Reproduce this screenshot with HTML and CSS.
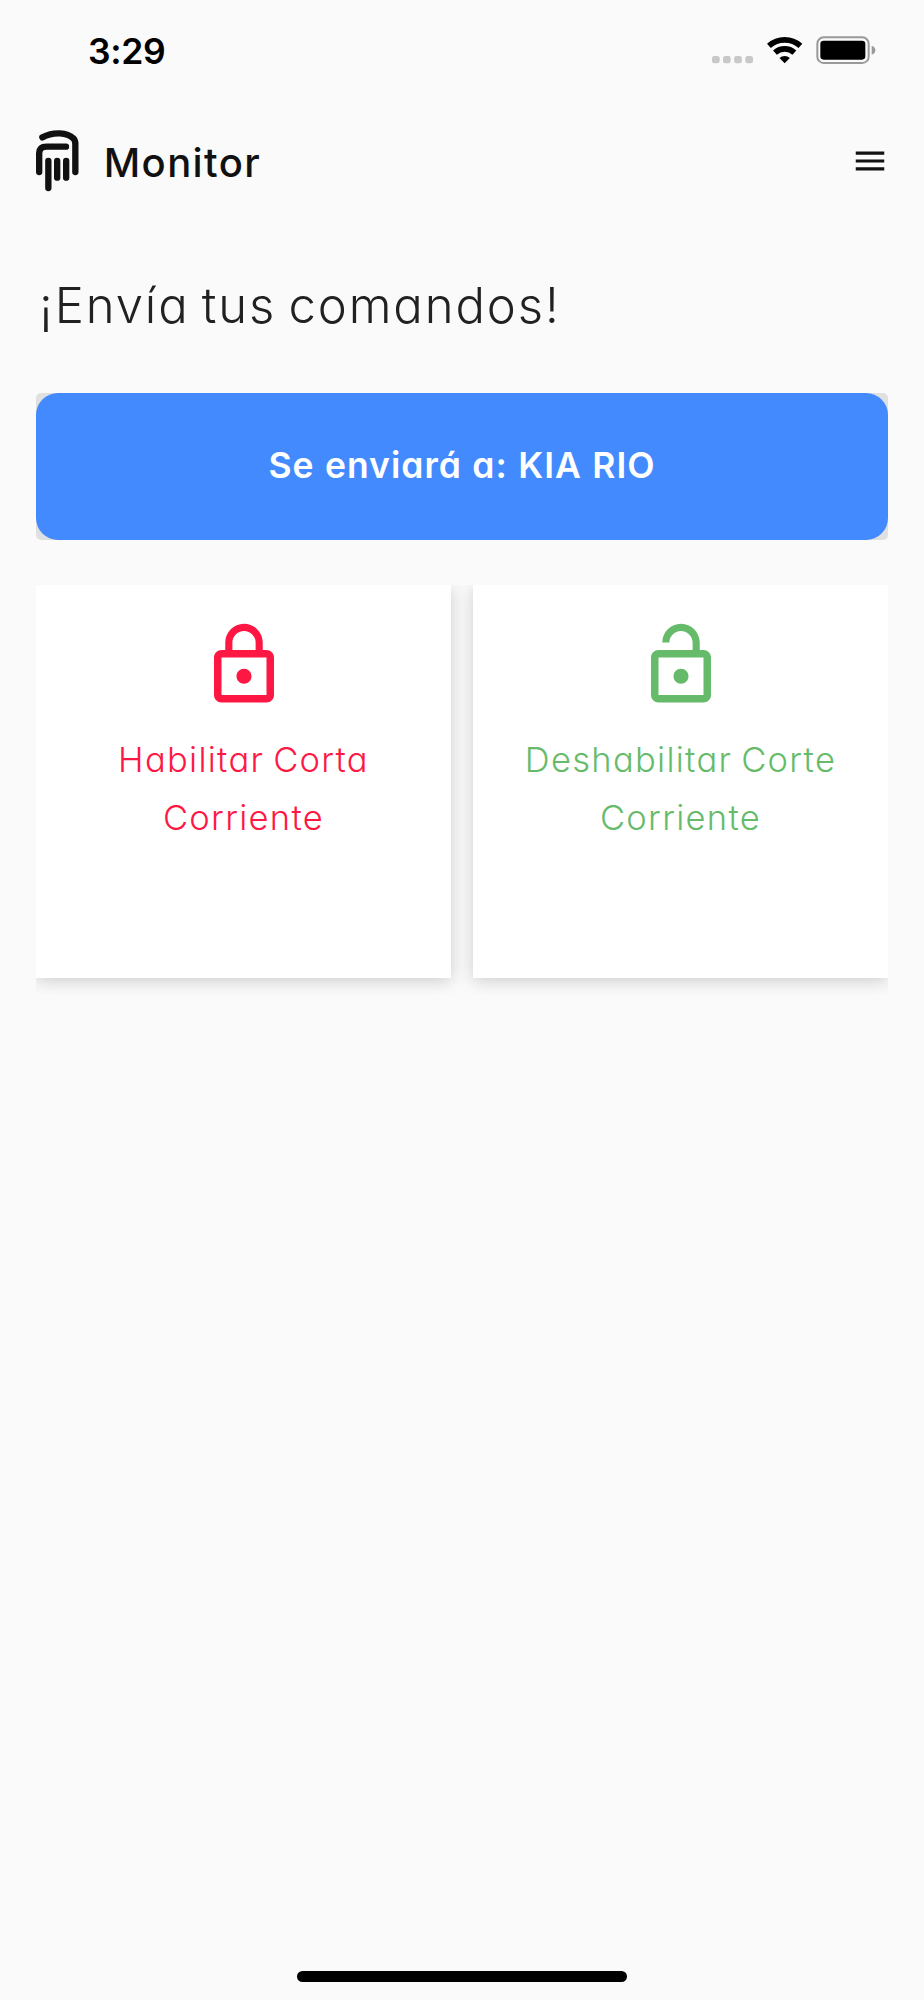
FILE: index.html
```html
<!DOCTYPE html>
<html lang="es">
<head>
    <title>Monitor</title>
    <meta charset="utf-8">
    <link rel="stylesheet" href="styles.css">
</head>

<body>
    <div class="screen">
        <div class="status-bar">
            <span class="time">3:29</span>
            <svg class="status-icons" viewBox="68 48 492 86">
                <g fill="#c8c8c8">
                    <rect x="68" y="108" width="23" height="22" rx="7"/>
                    <rect x="101" y="108" width="23" height="22" rx="7"/>
                    <rect x="134.500" y="108" width="23" height="22" rx="7"/>
                    <rect x="168" y="108" width="23" height="22" rx="7"/>
                </g>
                <g fill="none" stroke="#000" stroke-width="17">
                    <path d="M238.800 77.600a70.500 70.500 0 0 1 94.400 0"/>
                    <path d="M256.900 97.700a43.500 43.500 0 0 1 58.200 0"/>
                </g>
                <path d="M270.500 114a22 22 0 0 1 31 0L286 130z"/>
                <rect x="384" y="52" width="154" height="77" rx="19" fill="none" stroke="#999" stroke-width="6"/>
                <rect x="393" y="62" width="135" height="57" rx="10"/>
                <path d="M547 77q11 4 11 13.500t-11 13.500z" fill="#999"/>
            </svg>
        </div>

        <header class="header">
            <svg class="logo" viewBox="48 60 128 184">
                <path d="M67 82C102 64 142 68 160 85Q166 91 166 102V186M57.500 186V130Q57.500 110 80 110H138M85 153V234M111.500 153V203M138.500 153V203"/>
            </svg>
            <span class="brand">Monitor</span>
            <svg class="menu" viewBox="0 0 24 24">
                <path d="M3 18h18v-2H3v2zm0-5h18v-2H3v2zm0-7v2h18V6H3z"/>
            </svg>
        </header>

        <main>
            <h1 class="title">¡Envía tus comandos!</h1>
            <div class="target-wrap">
                <button class="target">Se enviará a: KIA RIO</button>
            </div>
            <div class="commands">
                <div class="card enable">
                    <svg class="lock" viewBox="0 0 24 24">
                        <path d="M12 17c1.100 0 2-.9 2-2s-.9-2-2-2-2 .9-2 2 .9 2 2 2zm6-9h-1V6c0-2.760-2.240-5-5-5S7 3.240 7 6v2H6c-1.100 0-2 .9-2 2v10c0 1.100.9 2 2 2h12c1.100 0 2-.9 2-2V10c0-1.100-.9-2-2-2zM8.900 6c0-1.710 1.390-3.100 3.100-3.100s3.100 1.390 3.100 3.100v2H8.900V6zM18 20H6V10h12v10z"/>
                    </svg>
                    <p>Habilitar Corta<br>Corriente</p>
                </div>
                <div class="card disable">
                    <svg class="lock" viewBox="0 0 24 24">
                        <path d="M12 17c1.100 0 2-.9 2-2s-.9-2-2-2-2 .9-2 2 .9 2 2 2zm6-9h-1V6c0-2.760-2.240-5-5-5S7 3.240 7 6h1.900c0-1.710 1.390-3.100 3.100-3.100s3.100 1.390 3.100 3.100v2H6c-1.100 0-2 .9-2 2v10c0 1.100.9 2 2 2h12c1.100 0 2-.9 2-2V10c0-1.100-.9-2-2-2zm0 12H6V10h12v10z"/>
                    </svg>
                    <p>Deshabilitar Corte<br>Corriente</p>
                </div>
            </div>
        </main>

        <div class="home-indicator"></div>
    </div>
</body>

</html>
```

FILE: styles.css
```css
body {
    margin: 0;
    font-family: Inter, sans-serif;
    font-feature-settings: "cv11";
    color: #212121;
    background-color: #fafafa;
}

.screen {
    display: flex;
    flex-direction: column;
    box-sizing: border-box;
    height: 2000px;
    padding: 0 36px 18px;
}

.status-bar {
    display: flex;
    justify-content: space-between;
    height: 100px;
    padding: 0 12px 0 52px;
}

.time {
    margin-top: 29px;
    font-size: 35.5px;
    line-height: 45px;
    font-weight: 600;
    letter-spacing: -0.3px;
    color: #000;
}

.status-icons {
    width: 164px;
    height: 28.7px;
    margin-top: 36px;
}

.header {
    display: flex;
    align-items: center;
    height: 122px;
}

.logo {
    width: 42.7px;
    height: 61.3px;
    fill: none;
    stroke: #111;
    stroke-width: 19;
    stroke-linecap: round;
}

.brand {
    margin: 4px 0 0 25px;
    font-size: 40px;
    line-height: 48px;
    font-weight: 500;
    letter-spacing: 1.4px;
    color: #111;
}

.menu {
    width: 38px;
    height: 38px;
    margin-left: auto;
    margin-right: -1px;
    fill: #111;
}

.title {
    margin: 56px 0 0 3px;
    font-size: 49px;
    line-height: 56px;
    font-weight: 300;
    letter-spacing: 1.9px;
    word-spacing: -3.5px;
    white-space: nowrap;
}

.target-wrap {
    height: 147px;
    margin-top: 59px;
    border-radius: 5px;
    background-color: #e0e0e0;
}

.target {
    display: block;
    width: 100%;
    height: 147px;
    padding: 0 0 3px;
    border: none;
    border-radius: 22px;
    background-color: #448aff;
    color: #fff;
    font-family: inherit;
    font-feature-settings: inherit;
    font-size: 35.5px;
    font-weight: 600;
    letter-spacing: 1px;
    word-spacing: 0.5px;
    cursor: pointer;
}

.commands {
    display: grid;
    grid-template-columns: 1fr 1fr;
    gap: 22px;
    height: 410px;
    margin-top: 45px;
    overflow: hidden;
}

.card {
    display: flex;
    flex-direction: column;
    align-items: center;
    box-sizing: border-box;
    height: 393px;
    padding-top: 35px;
    background-color: #fff;
    box-shadow: 0 3px 16px rgba(0, 0, 0, 0.18);
}

.card p {
    margin: 21px 0 0;
    font-size: 34.5px;
    line-height: 58px;
    font-weight: 300;
    letter-spacing: 1.3px;
    word-spacing: -2px;
    text-align: center;
    white-space: nowrap;
}

.lock {
    width: 90px;
    height: 90px;
    fill: currentColor;
}

.enable {
    color: #ff1744;
}

.disable {
    color: #66bb6a;
}

.home-indicator {
    width: 330px;
    height: 11px;
    margin: auto auto 0;
    border-radius: 6px;
    background-color: #000;
}
```
